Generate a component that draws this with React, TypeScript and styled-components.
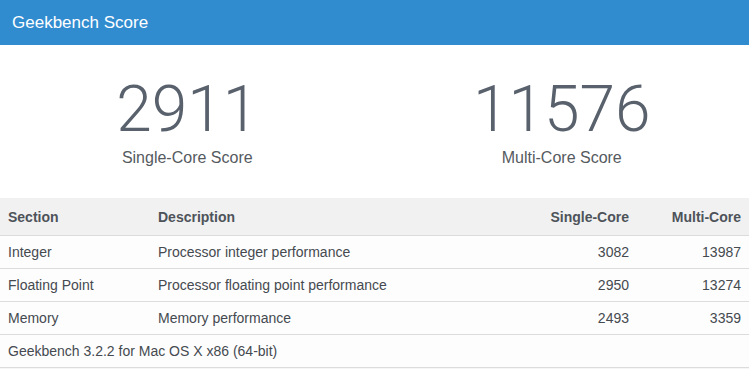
import styled, { createGlobalStyle } from 'styled-components';

const GlobalStyle = createGlobalStyle`
  body {
    margin: 0;
    background: #fff;
    font-family: 'Liberation Sans', Arial, sans-serif;
  }
`;

interface ScoreData {
  section: string;
  description: string;
  single: number;
  multi: number;
}

const rows: ScoreData[] = [
  { section: 'Integer', description: 'Processor integer performance', single: 3082, multi: 13987 },
  { section: 'Floating Point', description: 'Processor floating point performance', single: 2950, multi: 13274 },
  { section: 'Memory', description: 'Memory performance', single: 2493, multi: 3359 },
];

const Page = styled.div`
  width: 749px;
  height: 369px;
  overflow: hidden;
  background: #f6f6f6;
`;

const Header = styled.div`
  height: 45px;
  display: flex;
  align-items: center;
  padding: 0 12px;
  background: #318ccf;
  color: #fff;
  font-size: 17px;
`;

const Scores = styled.div`
  display: grid;
  grid-template-columns: 1fr 1fr;
  height: 153px;
  background: #fff;
`;

const ScoreBox = styled.div`
  display: flex;
  flex-direction: column;
  align-items: center;
  padding-top: 32px;
`;

const BigNumber = styled.div`
  font-family: Roboto, 'Liberation Sans', sans-serif;
  font-weight: 300;
  font-size: 64px;
  line-height: 66px;
  color: #59616d;
`;

const ScoreLabel = styled.div`
  margin-top: 6px;
  font-size: 16px;
  color: #555a60;
`;

const Row = styled.div<{ $head?: boolean }>`
  display: grid;
  grid-template-columns: 150px 1fr 150px 112px;
  align-items: center;
  height: ${(p) => (p.$head ? '37px' : '32px')};
  border-bottom: 1px solid #dcdcdc;
  background: ${(p) => (p.$head ? '#f1f1f1' : '#fdfdfd')};
  font-size: 14px;
  font-weight: ${(p) => (p.$head ? 'bold' : 'normal')};
  color: ${(p) => (p.$head ? '#4e535a' : '#454a50')};
`;

const Cell = styled.div<{ $right?: boolean }>`
  padding: 0 8px;
  text-align: ${(p) => (p.$right ? 'right' : 'left')};
  white-space: nowrap;
`;

const Footer = styled.div`
  height: 32px;
  display: flex;
  align-items: center;
  padding: 0 8px;
  border-bottom: 1px solid #dcdcdc;
  background: #fdfdfd;
  font-size: 14px;
  color: #454a50;
`;

const App = () => (
  <Page>
    <GlobalStyle />
    <Header>Geekbench Score</Header>
    <Scores>
      <ScoreBox>
        <BigNumber>2911</BigNumber>
        <ScoreLabel>Single-Core Score</ScoreLabel>
      </ScoreBox>
      <ScoreBox>
        <BigNumber>11576</BigNumber>
        <ScoreLabel>Multi-Core Score</ScoreLabel>
      </ScoreBox>
    </Scores>
    <Row $head>
      <Cell>Section</Cell>
      <Cell>Description</Cell>
      <Cell $right>Single-Core</Cell>
      <Cell $right>Multi-Core</Cell>
    </Row>
    {rows.map((r) => (
      <Row key={r.section}>
        <Cell>{r.section}</Cell>
        <Cell>{r.description}</Cell>
        <Cell $right>{r.single}</Cell>
        <Cell $right>{r.multi}</Cell>
      </Row>
    ))}
    <Footer>Geekbench 3.2.2 for Mac OS X x86 (64-bit)</Footer>
  </Page>
);

export default App;
